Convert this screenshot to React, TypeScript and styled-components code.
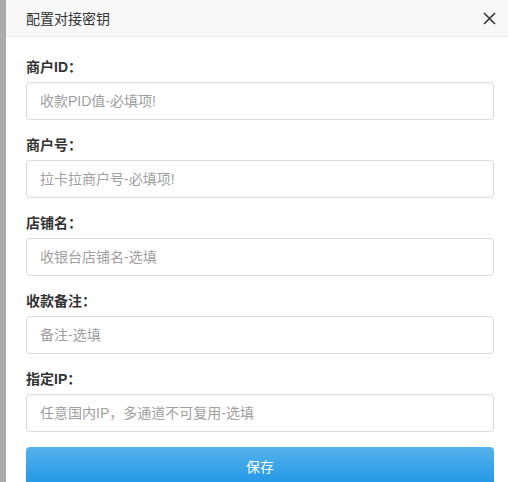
import styled, { createGlobalStyle } from "styled-components";

const Global = createGlobalStyle`
  html, body {
    margin: 0;
    padding: 0;
    background: #fff;
    font-family: "Liberation Sans", "Noto Sans CJK SC", sans-serif;
  }
`;

const Page = styled.div`
  display: flex;
  width: 508px;
  height: 482px;
  overflow: hidden;
`;

const Strip = styled.div`
  width: 6px;
  flex-shrink: 0;
  background: #ababab;
`;

const Dialog = styled.div`
  flex: 1;
  display: flex;
  flex-direction: column;
  background: #fff;
`;

const Header = styled.div`
  flex-shrink: 0;
  height: 36px;
  display: flex;
  align-items: center;
  justify-content: space-between;
  padding: 0 11px 0 20px;
  background: #f8f8f8;
  border-bottom: 1px solid #eee;
  color: #333;
  font-size: 14px;
`;

const Close = styled.button`
  border: 0;
  background: none;
  padding: 0;
  width: 16px;
  height: 16px;
  display: flex;
  align-items: center;
  justify-content: center;
  cursor: pointer;
`;

const Form = styled.div`
  flex-shrink: 0;
  padding: 20px 14px 0 20px;
  display: flex;
  flex-direction: column;
`;

const Field = styled.div`
  display: flex;
  flex-direction: column;
  margin-bottom: 15px;
`;

const Label = styled.label`
  height: 20px;
  line-height: 20px;
  margin-bottom: 5px;
  font-size: 14px;
  font-weight: bold;
  color: #333;
`;

const Input = styled.input`
  box-sizing: border-box;
  height: 38px;
  width: 100%;
  padding: 0 13px;
  border: 1px solid #d9d9d9;
  border-radius: 4px;
  font-family: inherit;
  font-size: 14px;
  color: #333;
  outline: none;
  &::placeholder {
    color: #a0a0a0;
  }
`;

const Save = styled.button`
  flex-shrink: 0;
  height: 38px;
  border: 0;
  border-radius: 4px;
  background: linear-gradient(#55b3ec, #2196e6);
  color: #fff;
  font-family: inherit;
  font-size: 14px;
  cursor: pointer;
`;

const fields = [
  { label: "商户ID：", placeholder: "收款PID值-必填项!" },
  { label: "商户号：", placeholder: "拉卡拉商户号-必填项!" },
  { label: "店铺名：", placeholder: "收银台店铺名-选填" },
  { label: "收款备注：", placeholder: "备注-选填" },
  { label: "指定IP：", placeholder: "任意国内IP，多通道不可复用-选填" },
];

export default function App() {
  return (
    <Page>
      <Global />
      <Strip />
      <Dialog>
        <Header>
          <span>配置对接密钥</span>
          <Close aria-label="关闭">
            <svg width="13" height="13" viewBox="0 0 13 13">
              <path d="M1 1L12 12M12 1L1 12" stroke="#333" strokeWidth="1.6" />
            </svg>
          </Close>
        </Header>
        <Form>
          {fields.map((f) => (
            <Field key={f.label}>
              <Label>{f.label}</Label>
              <Input placeholder={f.placeholder} />
            </Field>
          ))}
          <Save>保存</Save>
        </Form>
      </Dialog>
    </Page>
  );
}
